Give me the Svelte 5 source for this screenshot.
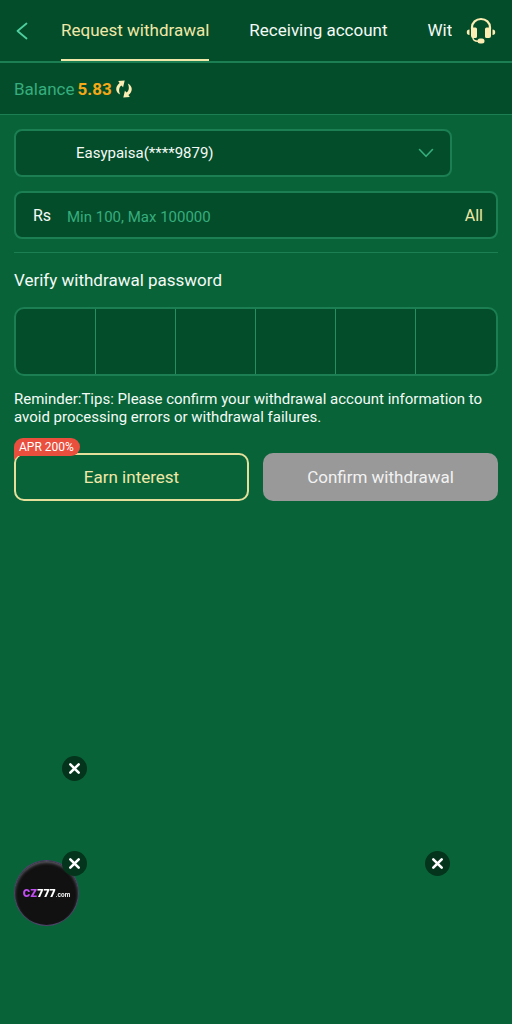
<script lang="ts">
  const tabs: string[] = ["Request withdrawal", "Receiving account", "Wit"];
  let activeTab: number = $state(0);
  let amount: string = $state("");
  let pin: string[] = $state(["", "", "", "", "", ""]);
</script>

{#snippet closeIcon()}
  <svg viewBox="0 0 25 25" width="25" height="25" aria-hidden="true">
    <path d="M8.300 8.300l8.400 8.400M16.700 8.300l-8.400 8.400" stroke="#fff" stroke-width="2.600" stroke-linecap="round" />
  </svg>
{/snippet}

<div class="page">
  <header class="topbar">
    <button class="back" aria-label="Back">
      <svg viewBox="0 0 12 18" width="12" height="18" fill="none" aria-hidden="true">
        <path d="M10.500 1.500L1.500 9l9 7.500" stroke="#4fcf9f" stroke-width="1.800" stroke-linecap="round" stroke-linejoin="round" />
      </svg>
    </button>
    <nav class="tabs">
      {#each tabs as tab, i}
        <button class="tab" class:active={activeTab === i} onclick={() => (activeTab = i)}>{tab}</button>
      {/each}
    </nav>
    <button class="support" aria-label="Customer service">
      <svg viewBox="0 0 30 28" width="30" height="28" fill="none" aria-hidden="true">
        <path d="M6 12V10.500C6 5.500 10 2 15 2s9 3.500 9 8.500V12" stroke="#fbedb4" stroke-width="2.200" />
        <path d="M5 10.500h4.500a1.500 1.500 0 0 1 1.500 1.500v7.500a1.500 1.500 0 0 1-1.500 1.500H7a2 2 0 0 1-2-2z" fill="#fbedb4" />
        <path d="M25 10.500h-4.500a1.500 1.500 0 0 0-1.500 1.500v7.500a1.500 1.500 0 0 0 1.500 1.500H23a2 2 0 0 0 2-2z" fill="#fbedb4" />
        <path d="M3.500 12.500v5.500C1.500 18 .8 17 .8 15.200s.7-2.700 2.700-2.700zM26.500 12.500v5.500c2 0 2.700-1 2.700-2.800s-.7-2.700-2.700-2.700z" fill="#fbedb4" />
        <path d="M6.800 20c0 3 1.500 4.300 5.200 4.300" stroke="#fbedb4" stroke-width="1.400" />
        <rect x="11.500" y="21.500" width="7" height="5" rx="2.500" fill="#fbedb4" />
      </svg>
    </button>
  </header>

  <section class="balance">
    <span>Balance</span>
    <strong>5.83</strong>
    <button class="refresh" aria-label="Refresh balance">
      <svg viewBox="0 0 18 18" width="18" height="18" aria-hidden="true">
        <path d="M3.200 1l6.500-.5-1.600 6.800-1.700-1.800C3.700 7.500 3.600 11 5.200 14.600 0 12 0 6.500 4.600 3z" fill="#fbedb4" />
        <path d="M14.800 17l-6.500.5 1.600-6.800 1.700 1.800c2.700-2 2.800-5.500 1.200-9.100 5.200 2.600 5.200 8.100.6 11.600z" fill="#fbedb4" />
      </svg>
    </button>
  </section>

  <main class="content">
    <div class="field account">
      <select aria-label="Receiving account">
        <option>Easypaisa(****9879)</option>
      </select>
      <svg class="chevron" viewBox="0 0 16 10" width="16" height="10" fill="none" aria-hidden="true">
        <path d="M1.500 1.500L8 8.300l6.500-6.800" stroke="#36ae7e" stroke-width="1.600" stroke-linecap="round" stroke-linejoin="round" />
      </svg>
    </div>

    <div class="field amount">
      <label for="amount">Rs</label>
      <input id="amount" type="text" inputmode="numeric" placeholder="Min 100, Max 100000" bind:value={amount} />
      <button class="all" onclick={() => (amount = "5.83")}>All</button>
    </div>

    <hr />

    <h2>Verify withdrawal password</h2>
    <div class="pin">
      {#each pin as _, i}
        <input type="password" maxlength="1" inputmode="numeric" aria-label={`Password digit ${i + 1}`} bind:value={pin[i]} />
      {/each}
    </div>

    <p class="tips">
      Reminder:Tips: Please confirm your withdrawal account information to avoid processing errors or withdrawal failures.
    </p>

    <div class="actions">
      <button class="action earn">
        Earn interest
        <span class="badge">APR 200%</span>
      </button>
      <button class="action confirm" disabled>Confirm withdrawal</button>
    </div>
  </main>

  <button class="close upper" aria-label="Close promotion">{@render closeIcon()}</button>
  <a class="logo" href="#home" aria-label="CZ777.com">
    <span class="brand">CZ</span><span class="digits">777</span><span class="domain">.com</span>
  </a>
  <button class="close lower" aria-label="Close logo">{@render closeIcon()}</button>
  <button class="close right" aria-label="Close banner">{@render closeIcon()}</button>
</div>

<style>
  :global(body) {
    margin: 0;
    background: #086438;
  }

  .page {
    min-height: 100vh;
    color: #f4faf6;
    background: #086438;
    font-family: Roboto, sans-serif;
  }

  .page * {
    box-sizing: border-box;
  }

  button,
  input,
  select {
    margin: 0;
    padding: 0;
    border: 0;
    background: none;
    color: inherit;
    font: inherit;
  }

  button {
    cursor: pointer;
  }

  svg {
    display: block;
  }

  .topbar {
    display: flex;
    height: 63px;
    padding: 0 16px;
    border-bottom: 2px solid #1b7f53;
    background: #044d2a;
  }

  .back {
    width: 25px;
  }

  .tabs {
    display: flex;
    flex: 1;
    min-width: 0;
    overflow: hidden;
  }

  .tab {
    flex: none;
    margin: 0 20px;
    border-bottom: 2px solid transparent;
    font-size: 17px;
    white-space: nowrap;
  }

  .tab:last-child {
    margin-right: 0;
  }

  .tab.active {
    border-color: #f0e8a8;
    color: #f0e8a8;
  }

  .support {
    margin-left: 14px;
  }

  .balance {
    display: flex;
    align-items: center;
    gap: 3px;
    height: 52px;
    padding: 0 14px;
    border-bottom: 1px solid #1b7f53;
    background: #044d2a;
    color: #36ae7e;
    font-size: 17px;
  }

  .balance strong {
    color: #f5a918;
  }

  .content {
    padding: 14px;
  }

  .field {
    display: flex;
    align-items: center;
    height: 48px;
    border: 2px solid #1b7f53;
    border-radius: 8px;
    background: #044d2a;
  }

  .account {
    position: relative;
    margin-right: 46px;
    font-size: 15px;
  }

  .account select {
    width: 100%;
    height: 100%;
    padding-left: 60px;
    appearance: none;
  }

  .chevron {
    position: absolute;
    right: 16px;
    pointer-events: none;
  }

  .amount {
    margin: 14px 0 13px;
    padding: 0 13px 0 17px;
    font-size: 15px;
  }

  .amount label {
    width: 34px;
    font-size: 16px;
  }

  .amount input {
    flex: 1;
    min-width: 0;
    padding-top: 4px;
  }

  .amount input::placeholder {
    color: #36ae7e;
    opacity: 1;
  }

  .all {
    color: #f0e8a8;
    font-size: 16px;
  }

  hr {
    margin: 0;
    border: 0;
    border-top: 1px solid #1b7f53;
  }

  h2 {
    margin: 15px 0;
    font-size: 17px;
    font-weight: 400;
    line-height: 24px;
  }

  .pin {
    display: grid;
    grid-template-columns: repeat(6, 1fr);
    height: 69px;
    overflow: hidden;
    border: 2px solid #1b7f53;
    border-radius: 10px;
    background: #044d2a;
  }

  .pin input {
    min-width: 0;
    border-right: 1px solid #229061;
    text-align: center;
  }

  .pin input:last-child {
    border-right: 0;
  }

  .tips {
    margin: 14px 0 27px;
    font-size: 15px;
    line-height: 18px;
  }

  .actions {
    display: grid;
    grid-template-columns: 1fr 1fr;
    gap: 14px;
  }

  .action {
    position: relative;
    height: 48px;
    border-radius: 10px;
    font-size: 17px;
  }

  .earn {
    border: 2px solid #e4e09c;
    color: #f0e8a8;
  }

  .confirm {
    background: #999;
    color: #f2f2f2;
    cursor: default;
  }

  .badge {
    position: absolute;
    top: -17px;
    left: -2px;
    height: 18px;
    padding: 0 6px 0 5px;
    border-radius: 9px 9px 9px 0;
    background: #ea4e3d;
    color: #fff;
    font-size: 12px;
    line-height: 18px;
  }

  /* little tail that folds over the button's corner */
  .badge::after {
    content: "";
    position: absolute;
    top: 100%;
    left: 0;
    width: 4px;
    height: 4px;
    background: #ea4e3d;
    clip-path: polygon(0 0, 100% 0, 0 100%);
  }

  .close {
    position: fixed;
    border-radius: 50%;
    background: #04341c;
  }

  .upper {
    bottom: 243px;
    left: 62px;
  }

  .lower {
    bottom: 148px;
    left: 62px;
  }

  .right {
    right: 62px;
    bottom: 148px;
  }

  .logo {
    position: fixed;
    bottom: 98px;
    left: 14px;
    display: flex;
    align-items: baseline;
    justify-content: center;
    width: 65px;
    height: 66px;
    border: 1px solid #51436b;
    border-radius: 50%;
    background: #111112;
    box-shadow: inset 0 2px 3px #56565c;
    color: #fff;
    font-family: Inter, sans-serif;
    font-size: 10px;
    font-weight: 900;
    line-height: 64px;
    text-decoration: none;
  }

  .brand {
    color: #c04df0;
  }

  .domain {
    font-size: 6px;
    font-weight: 700;
  }
</style>
